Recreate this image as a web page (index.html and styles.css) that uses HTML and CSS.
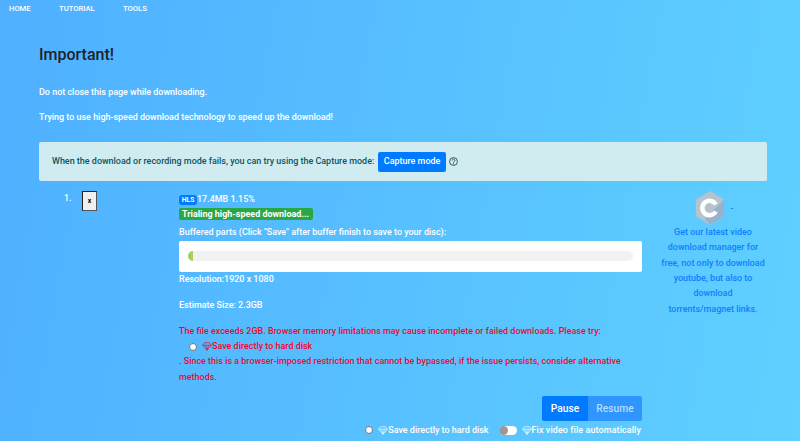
FILE: index.html
```html
<!DOCTYPE html>
<html lang="en">
<head>
<meta charset="utf-8">
<title>Important!</title>
<link rel="stylesheet" href="styles.css">
</head>
<body>
<nav class="nav">
  <a class="nav-link">HOME</a>
  <a class="nav-link">TUTORIAL</a>
  <a class="nav-link">TOOLS</a>
</nav>
<main class="page">
  <h1 class="title">Important!</h1>
  <p class="note">Do not close this page while downloading.</p>
  <p class="note">Trying to use high-speed download technology to speed up the download!</p>
  <div class="alert">
    <span>When the download or recording mode fails, you can try using the Capture mode:</span>
    <button class="btn capture">Capture mode</button>
    <svg class="help" viewBox="0 0 16 16" width="9" height="9"><circle cx="8" cy="8" r="7" fill="none" stroke="#17414f" stroke-width="1.5"/><path d="M5.6 6.2a2.4 2.4 0 1 1 3.6 2.1c-.8.5-1.2.9-1.2 1.9" fill="none" stroke="#17414f" stroke-width="1.5"/><circle cx="8" cy="12.2" r="1" fill="#17414f"/></svg>
  </div>
  <section class="task">
    <div class="index"><span class="num">1.</span><button class="close">x</button></div>
    <div class="main">
      <div class="stats"><span class="hls">HLS</span>17.4MB 1.15%</div>
      <div class="trial-row"><span class="trial">Trialing high-speed download...</span></div>
      <div class="buffer-label">Buffered parts (Click "Save" after buffer finish to save to your disc):</div>
      <div class="buffer"><div class="track"><div class="fill"></div></div></div>
      <div class="info">Resolution:1920 x 1080</div>
      <div class="info size">Estimate Size: 2.3GB</div>
      <div class="warn">
        <div>The file exceeds 2GB. Browser memory limitations may cause incomplete or failed downloads. Please try:</div>
        <label class="warn-option"><span class="radio"></span><svg class="gem" viewBox="0 0 16 14" width="10" height="9"><path d="M4 1h8l3 4-7 8-7-8zM1 5h14M5.500 5L8 13l2.500-8" fill="none" stroke="currentColor" stroke-width="1.100" stroke-linejoin="round"/></svg>Save directly to hard disk</label>
        <div>. Since this is a browser-imposed restriction that cannot be bypassed, if the issue persists, consider alternative methods.</div>
      </div>
      <div class="actions">
        <button class="btn pause">Pause</button><button class="btn resume">Resume</button>
      </div>
      <div class="options">
        <label class="opt"><span class="radio"></span><svg class="gem" viewBox="0 0 16 14" width="10" height="9"><path d="M4 1h8l3 4-7 8-7-8zM1 5h14M5.500 5L8 13l2.500-8" fill="none" stroke="currentColor" stroke-width="1.100" stroke-linejoin="round"/></svg>Save directly to hard disk</label>
        <label class="opt opt-fix"><span class="switch"><span class="knob"></span></span><svg class="gem" viewBox="0 0 16 14" width="10" height="9"><path d="M4 1h8l3 4-7 8-7-8zM1 5h14M5.500 5L8 13l2.500-8" fill="none" stroke="currentColor" stroke-width="1.100" stroke-linejoin="round"/></svg>Fix video file automatically</label>
      </div>
    </div>
    <aside class="side">
      <div class="logo-row">
        <svg class="logo" viewBox="0 0 28 34" width="28" height="34"><path d="M14 0l14 8.500v17L14 34 0 25.500v-17z" fill="#b4c3cc"/><path d="M28 8.500v17L14 34 9 28z" fill="#97b2cb"/><path d="M19.800 20.500a7.200 7.200 0 1 1 0-7" fill="none" stroke="#fff" stroke-width="4.500"/></svg>
        <span class="dash">-</span>
      </div>
      <p class="promo">Get our latest video download manager for free, not only to download youtube, but also to download torrents/magnet links.</p>
    </aside>
  </section>
</main>
</body>
</html>
```
FILE: styles.css
```css
* { box-sizing: border-box; }
html, body { height: 100%; }
body {
  margin: 0;
  overflow: hidden;
  font-family: Roboto, "Liberation Sans", sans-serif;
  font-size: 8.96px;
  line-height: 15.36px;
  font-weight: 500;
  color: #fff;
  background: linear-gradient(100deg, #4fb0ff 0%, #5fd0ff 100%);
}
.nav { display: flex; height: 16px; padding: 1px 0 0 9px; gap: 28.5px; font-size: 7.6px; line-height: 15px; }
.page { padding: 0 33px 0 39px; }
.title { margin: 27px 0 0; font-size: 16px; line-height: 24px; font-weight: 500; color: #1f2326; }
.note { margin: 18px 0 0; line-height: 15px; }
.note + .note { margin-top: 10px; }
.alert {
  display: flex; align-items: center; gap: 4px;
  height: 39px; margin-top: 17px; padding: 0 13px;
  background: #d1ecf1; color: #0c5460; border-radius: 2px;
}
.btn {
  font: inherit; border: 0; color: #fff; background: #007bff;
  height: 20px; padding: 0 5.5px; border-radius: 2px;
}
.help { margin-left: -1px; }
.task { display: grid; grid-template-columns: 140px 463px 125px; margin-top: 9px; }
.index { display: flex; align-items: flex-start; padding-left: 25px; gap: 11px; }
.num { width: 7px; padding-top: 1px; }
.close {
  width: 15px; height: 20px; padding: 0; margin-top: 1px;
  font: 700 7px Roboto, sans-serif; color: #000; background: #f0f0f0;
  border: 1.500px solid #222; border-right-color: #555; border-bottom-color: #555;
}
.main { display: flex; flex-direction: column; }
.stats { height: 17px; padding-top: 2px; line-height: 15px; }
.hls {
  display: inline-block; width: 18px; height: 10px; text-align: center;
  font-size: 6.8px; line-height: 10px; font-weight: 700; background: #007bff; border-radius: 3px;
}
.trial-row { display: flex; margin-top: 1px; }
.trial {
  height: 12px; padding: 0 4px 0 3px;
  font-size: 8.96px; line-height: 12px; font-weight: 700; background: #28a745; border-radius: 2px;
}
.buffer-label { margin-top: 5px; height: 16px; line-height: 15px; }
.buffer { height: 31px; padding: 10px 9px; background: #fff; border-radius: 2px; }
.track { height: 10px; background: #f2f2f2; border-radius: 5px; overflow: hidden; }
.fill { width: 1.15%; min-width: 5px; height: 100%; background: #a6cf5c; }
.info { height: 15px; line-height: 15px; }
.size { margin-top: 10.5px; }
.warn { margin-top: 11px; color: #f2071f; }
.warn-option { display: flex; align-items: center; padding-left: 10px; }
.radio { width: 8px; height: 8px; margin-right: 5px; border-radius: 50%; background: #fff; border: 1px solid #777; }
.actions { display: flex; justify-content: flex-end; margin-top: 11.1px; }
.pause, .resume { height: 25px; font-size: 10.24px; }
.pause { width: 46px; padding: 0; border-radius: 2px 0 0 2px; }
.resume { width: 54px; padding: 0; border-radius: 0 2px 2px 0; background: #2f96ff; color: #b5dcff; }
.options { display: flex; justify-content: flex-end; gap: 10px; margin-top: 1.5px; padding-right: 1px; line-height: 15px; }
.opt { display: flex; align-items: center; }
.opt-fix { letter-spacing: .1px; }
.switch { display: block; width: 18px; height: 9px; margin-right: 5px; border-radius: 5px; background: #fff; }
.knob { display: block; width: 9px; height: 9px; border-radius: 50%; background: #999; }
.side { color: #0f80ff; text-align: center; padding: 0 1px 0 18px; }
.logo-row { display: flex; justify-content: center; align-items: center; gap: 6px; padding: 1px 0 0 4px; }
.dash { line-height: 34px; }
.promo { margin: 0; line-height: 15.36px; }
```
